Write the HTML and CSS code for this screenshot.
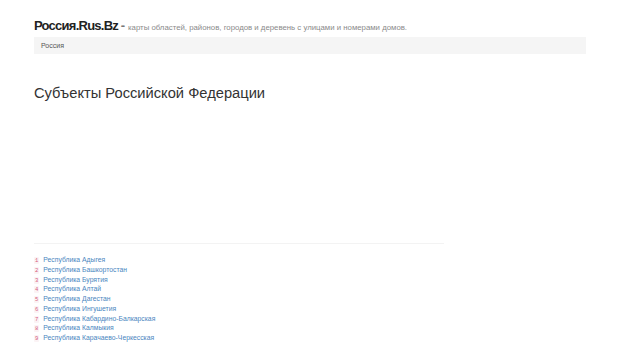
FILE: index.html
```html
<!DOCTYPE html>
<html lang="ru">
<head>
    <meta charset="UTF-8">
    <title>Субъекты Российской Федерации</title>
    <link rel="stylesheet" href="styles.css">
</head>
<body>
    <div class="container">
        <div class="header">
            <span class="logo">Россия.Rus.Bz</span>
            <span class="dash">-</span>
            <span class="tagline">карты областей, районов, городов и деревень с улицами и номерами домов.</span>
        </div>
        <div class="breadcrumb">Россия</div>

        <h1>Субъекты Российской Федерации</h1>

        <div class="ad-space"></div>
        <hr class="divider">

        <ul class="regions">
            <li><code>1</code><a href="#">Республика Адыгея</a></li>
            <li><code>2</code><a href="#">Республика Башкортостан</a></li>
            <li><code>3</code><a href="#">Республика Бурятия</a></li>
            <li><code>4</code><a href="#">Республика Алтай</a></li>
            <li><code>5</code><a href="#">Республика Дагестан</a></li>
            <li><code>6</code><a href="#">Республика Ингушетия</a></li>
            <li><code>7</code><a href="#">Республика Кабардино-Балкарская</a></li>
            <li><code>8</code><a href="#">Республика Калмыкия</a></li>
            <li><code>9</code><a href="#">Республика Карачаево-Черкесская</a></li>
        </ul>
    </div>
</body>
</html>
```

FILE: styles.css
```css
body {
    margin: 0;
    font-family: "Liberation Sans", Arial, sans-serif;
    color: #333;
    background: #fff;
}
.container {
    width: 552px;
    margin: 0 0 0 34px;
}
.header {
    padding-top: 17px;
    height: 20px;
    line-height: 18px;
    font-size: 10px;
}
.logo {
    font-size: 13px;
    font-weight: bold;
    letter-spacing: -0.75px;
    color: #222;
}
.dash {
    font-size: 13px;
    font-weight: bold;
    color: #777;
}
.tagline {
    font-size: 7.8px;
    color: #8a8a8a;
}
.breadcrumb {
    background: #f5f5f5;
    height: 17px;
    line-height: 17px;
    padding: 0 7px;
    font-size: 7px;
    color: #555;
}
h1 {
    font-size: 14.7px;
    font-weight: normal;
    margin: 29px 0 0;
    line-height: 20px;
}
.ad-space {
    height: 140px;
}
.divider {
    width: 410px;
    margin: 0;
    border: 0;
    border-top: 1px solid #f3f3f3;
}
.regions {
    list-style: none;
    margin: 11px 0 0;
    padding: 0;
}
.regions li {
    font-size: 6.8px;
    height: 9.75px;
    line-height: 9.75px;
}
.regions code {
    display: inline-block;
    font-family: "Liberation Mono", monospace;
    font-size: 5.5px;
    line-height: 7px;
    padding: 0 1px;
    margin-right: 4px;
    color: #d45a7c;
    background: #fbf3f5;
    border-radius: 1px;
}
.regions a {
    color: #4a86c0;
    text-decoration: none;
}
```
